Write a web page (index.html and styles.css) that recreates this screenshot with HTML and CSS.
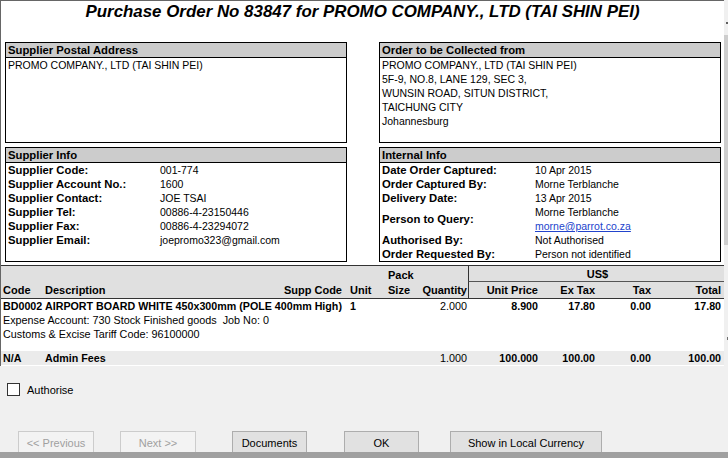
FILE: index.html
```html
<!DOCTYPE html>
<html lang="en">
<head>
<meta charset="utf-8">
<title>Purchase Order 83847</title>
<link rel="stylesheet" href="styles.css">
</head>
<body>
<div class="window">
  <div class="viewport">
    <main class="doc">
      <h1 class="title">Purchase Order No 83847 for PROMO COMPANY., LTD (TAI SHIN PEI)</h1>
      <div class="boxes">
        <section class="box">
          <h2 class="box-head">Supplier Postal Address</h2>
          <div class="box-body address">
            <div>PROMO COMPANY., LTD (TAI SHIN PEI)</div>
          </div>
        </section>
        <section class="box">
          <h2 class="box-head">Order to be Collected from</h2>
          <div class="box-body address">
            <div>PROMO COMPANY., LTD (TAI SHIN PEI)</div>
            <div>5F-9, NO.8, LANE 129, SEC 3,</div>
            <div>WUNSIN ROAD, SITUN DISTRICT,</div>
            <div>TAICHUNG CITY</div>
            <div>Johannesburg</div>
          </div>
        </section>
        <section class="box">
          <h2 class="box-head">Supplier Info</h2>
          <dl class="box-body info supplier">
            <dt>Supplier Code:</dt><dd>001-774</dd>
            <dt>Supplier Account No.:</dt><dd>1600</dd>
            <dt>Supplier Contact:</dt><dd>JOE TSAI</dd>
            <dt>Supplier Tel:</dt><dd>00886-4-23150446</dd>
            <dt>Supplier Fax:</dt><dd>00886-4-23294072</dd>
            <dt>Supplier Email:</dt><dd>joepromo323@gmail.com</dd>
          </dl>
        </section>
        <section class="box">
          <h2 class="box-head">Internal Info</h2>
          <dl class="box-body info internal">
            <dt>Date Order Captured:</dt><dd>10 Apr 2015</dd>
            <dt>Order Captured By:</dt><dd>Morne Terblanche</dd>
            <dt>Delivery Date:</dt><dd>13 Apr 2015</dd>
            <dt class="span2">Person to Query:</dt><dd>Morne Terblanche</dd>
            <dd><a href="#">morne@parrot.co.za</a></dd>
            <dt>Authorised By:</dt><dd>Not Authorised</dd>
            <dt>Order Requested By:</dt><dd>Person not identified</dd>
          </dl>
        </section>
      </div>
      <table class="lines">
        <colgroup>
          <col class="w-code"><col class="w-desc"><col class="w-supp"><col class="w-unit"><col class="w-pack">
          <col class="w-qty"><col class="w-price"><col class="w-extax"><col class="w-tax"><col class="w-total">
        </colgroup>
        <thead>
          <tr class="head-top">
            <th colspan="4"></th>
            <th>Pack</th>
            <th></th>
            <th colspan="4" class="currency">US$</th>
          </tr>
          <tr class="head-main">
            <th>Code</th>
            <th>Description</th>
            <th class="r supp">Supp Code</th>
            <th>Unit</th>
            <th>Size</th>
            <th class="r qty">Quantity</th>
            <th class="r money split">Unit Price</th>
            <th class="r money">Ex Tax</th>
            <th class="r money">Tax</th>
            <th class="r total">Total</th>
          </tr>
        </thead>
        <tbody>
          <tr>
            <td class="b">BD0002</td>
            <td class="b" colspan="2">AIRPORT BOARD WHITE 450x300mm (POLE 400mm High)</td>
            <td class="b">1</td>
            <td></td>
            <td class="r qty">2.000</td>
            <td class="r money b">8.900</td>
            <td class="r money b">17.80</td>
            <td class="r money b">0.00</td>
            <td class="r total b">17.80</td>
          </tr>
          <tr><td colspan="10">Expense Account: 730 Stock Finished goods&nbsp; Job No: 0</td></tr>
          <tr><td colspan="10">Customs &amp; Excise Tariff Code: 96100000</td></tr>
          <tr class="spacer"><td colspan="10"></td></tr>
          <tr class="fee">
            <td class="b">N/A</td>
            <td class="b" colspan="2">Admin Fees</td>
            <td></td>
            <td></td>
            <td class="r qty">1.000</td>
            <td class="r money b">100.000</td>
            <td class="r money b">100.00</td>
            <td class="r money b">0.00</td>
            <td class="r total b">100.00</td>
          </tr>
        </tbody>
      </table>
    </main>
    <div class="scrollbar">
      <span class="mark-top"></span>
      <span class="thumb"></span>
      <span class="mark-bottom"></span>
    </div>
  </div>
  <div class="dialog">
    <label class="auth"><span class="check"></span>Authorise</label>
    <div class="buttons">
      <button class="btn" disabled>&lt;&lt; Previous</button>
      <button class="btn next" disabled>Next &gt;&gt;</button>
      <button class="btn docs">Documents</button>
      <button class="btn ok">OK</button>
      <button class="btn local">Show in Local Currency</button>
    </div>
  </div>
  <div class="statusbar"></div>
</div>
</body>
</html>
```
FILE: styles.css
```css
* { box-sizing: border-box; margin: 0; padding: 0; }
html, body { width: 728px; height: 458px; overflow: hidden; }
body {
  font-family: "Liberation Sans", Arial, sans-serif;
  font-size: 10.5px;
  color: #000;
  background: #f0f0f0;
}
.window { display: grid; grid-template-rows: 366px 86px 6px; height: 458px; }
.viewport { display: grid; grid-template-columns: 724px 4px; overflow: hidden; }
.doc {
  background: #fff;
  border-left: 1px solid #666;
  border-top: 1px solid #666;
  overflow: hidden;
}
.title {
  font-size: 16.9px;
  font-weight: bold;
  font-style: italic;
  line-height: 18px;
  text-align: center;
  white-space: nowrap;
  margin: 2px 0 21px;
}
.boxes {
  display: grid;
  grid-template-columns: 342px 342px;
  column-gap: 32px;
  row-gap: 4px;
  padding-left: 4px;
  margin-bottom: 3px;
}
.box { border: 1px solid #000; }
.box-head {
  background: #ccc;
  border-bottom: 1px solid #000;
  font-size: 11.3px;
  font-weight: bold;
  line-height: 14px;
  padding-left: 2px;
  white-space: nowrap;
}
.box-body { padding-left: 2px; line-height: 14px; white-space: nowrap; }
.address { height: 84px; }
.info { height: 98px; display: grid; grid-auto-rows: 14px; }
.supplier { grid-template-columns: 152px 1fr; }
.internal { grid-template-columns: 153px 1fr; }
.info dt { grid-column: 1; font-weight: bold; font-size: 11.3px; }
.info dd { grid-column: 2; }
.info .span2 { grid-row: span 2; align-self: center; }
.info a { color: #2244cc; text-decoration: underline; }

.lines {
  width: 723px;
  table-layout: fixed;
  border-collapse: separate;
  border-spacing: 0;
  border-top: 1px solid #333;
  line-height: 14px;
  font-size: 10.8px;
}
.w-code { width: 42px; }
.w-desc { width: 227px; }
.w-supp { width: 78px; }
.w-unit { width: 38px; }
.w-pack { width: 34px; }
.w-qty { width: 48px; }
.w-price { width: 72px; }
.w-extax { width: 57px; }
.w-tax { width: 56px; }
.w-total { width: 71px; }
.lines thead { background: #e0e0e0; }
.lines th, .lines td {
  padding: 0 0 0 2px;
  text-align: left;
  white-space: nowrap;
  overflow: visible;
}
.lines th { font-weight: bold; font-size: 11px; }
.head-top { height: 16px; }
.head-top th { vertical-align: bottom; }
.head-main { height: 17px; }
.head-main th { border-bottom: 1px solid #333; vertical-align: middle; }
.currency { text-align: center !important; border-left: 1px solid #333; border-bottom: 1px solid #555; }
.split { border-left: 1px solid #333; }
.lines td { height: 14px; }
.lines .b { font-weight: bold; font-size: 10.7px; }
.lines .r { text-align: right; padding-left: 0; }
.lines .supp { padding-right: 6px; }
.lines .qty { padding-right: 1px; }
.lines .money { padding-right: 2px; }
.lines .total { padding-right: 3px; }
.spacer td { height: 10px; }
.fee td { background: #ebebeb; }

.scrollbar { background: #f0f0f0; display: flex; flex-direction: column; }
.mark-top { width: 2px; height: 2px; background: #606060; margin: 22px 0 0 2px; }
.thumb { height: 210px; background: #cdcdcd; margin-top: 11px; }
.mark-bottom { width: 1px; height: 3px; background: #707070; margin: 92px 0 0 3px; }

.dialog { padding: 17px 0 0 7px; overflow: hidden; }
.auth { display: flex; align-items: center; gap: 7px; font-size: 11px; height: 13px; }
.check { width: 13px; height: 13px; border: 1px solid #333; background: #fff; }
.buttons { display: flex; margin-top: 35px; padding-left: 11px; }
.btn {
  width: 75px;
  height: 23px;
  flex: none;
  border: 1px solid #adadad;
  background: #e1e1e1;
  font-family: "Liberation Sans", Arial, sans-serif;
  font-size: 11px;
  color: #000;
}
.btn:disabled { width: 76px; border-color: #ccc; background: #f3f3f3; color: #a0a0a0; }
.next { margin-left: 26px; }
.docs { margin-left: 36px; }
.ok { margin-left: 37px; }
.local { margin-left: 31px; width: 152px; }
.statusbar { background: #a0a0a0; }
```
